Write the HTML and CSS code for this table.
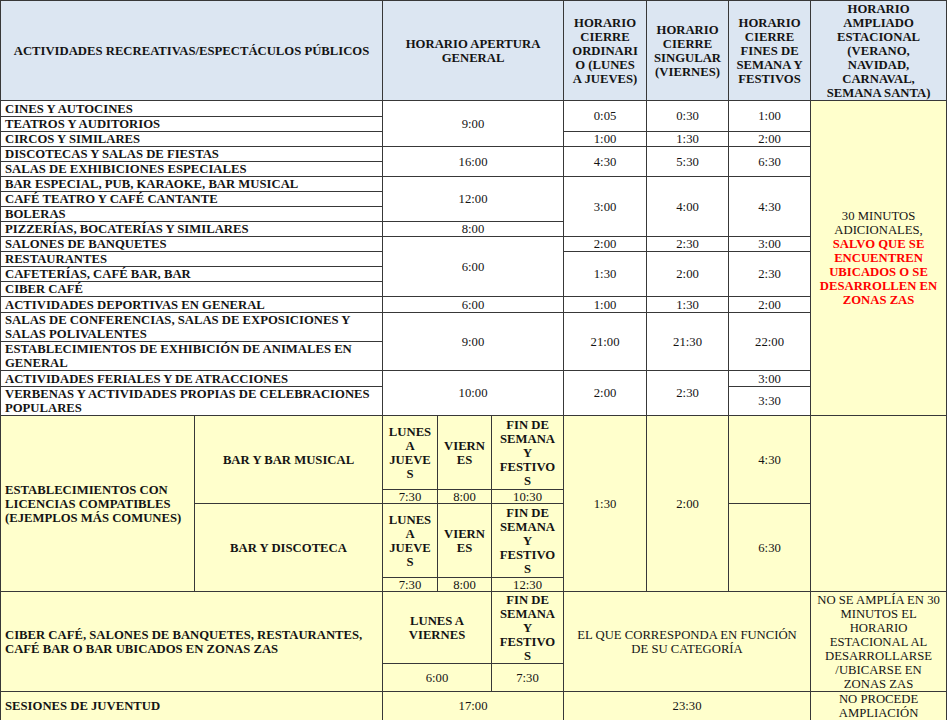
FILE: index.html
```html
<!DOCTYPE html>
<html lang="es">
<head>
<meta charset="utf-8">
<title>Horarios</title>
<link rel="stylesheet" href="styles.css">
</head>
<body>
<table class="grid">
  <colgroup>
    <col class="w194"><col class="w188"><col class="w55"><col class="w54"><col class="w72"><col class="w83"><col class="w82"><col class="w82"><col class="w136">
  </colgroup>
  <tr class="h100 hd">
    <td colspan="2">ACTIVIDADES RECREATIVAS/ESPECTÁCULOS PÚBLICOS</td>
    <td colspan="3">HORARIO APERTURA<br>GENERAL</td>
    <td>HORARIO<br>CIERRE<br>ORDINARI<br>O (LUNES<br>A JUEVES)</td>
    <td>HORARIO<br>CIERRE<br>SINGULAR<br>(VIERNES)</td>
    <td>HORARIO<br>CIERRE<br>FINES DE<br>SEMANA Y<br>FESTIVOS</td>
    <td class="top7">HORARIO<br>AMPLIADO<br>ESTACIONAL<br>(VERANO,<br>NAVIDAD,<br>CARNAVAL,<br>SEMANA SANTA)</td>
  </tr>
  <tr class="h16">
    <td colspan="2" class="lab">CINES Y AUTOCINES</td>
    <td colspan="3" rowspan="3">9:00</td>
    <td rowspan="2">0:05</td><td rowspan="2">0:30</td><td rowspan="2">1:00</td>
    <td rowspan="18" class="y">30 MINUTOS<br>ADICIONALES,<br><span class="red">SALVO QUE SE<br>ENCUENTREN<br>UBICADOS O SE<br>DESARROLLEN EN<br>ZONAS ZAS</span></td>
  </tr>
  <tr class="h15"><td colspan="2" class="lab">TEATROS Y AUDITORIOS</td></tr>
  <tr class="h15"><td colspan="2" class="lab">CIRCOS Y SIMILARES</td><td>1:00</td><td>1:30</td><td>2:00</td></tr>
  <tr class="h15">
    <td colspan="2" class="lab">DISCOTECAS Y SALAS DE FIESTAS</td>
    <td colspan="3" rowspan="2">16:00</td>
    <td rowspan="2">4:30</td><td rowspan="2">5:30</td><td rowspan="2">6:30</td>
  </tr>
  <tr class="h15"><td colspan="2" class="lab">SALAS DE EXHIBICIONES ESPECIALES</td></tr>
  <tr class="h15">
    <td colspan="2" class="lab">BAR ESPECIAL, PUB, KARAOKE, BAR MUSICAL</td>
    <td colspan="3" rowspan="3">12:00</td>
    <td rowspan="4">3:00</td><td rowspan="4">4:00</td><td rowspan="4">4:30</td>
  </tr>
  <tr class="h15"><td colspan="2" class="lab">CAFÉ TEATRO Y CAFÉ CANTANTE</td></tr>
  <tr class="h15"><td colspan="2" class="lab">BOLERAS</td></tr>
  <tr class="h15"><td colspan="2" class="lab">PIZZERÍAS, BOCATERÍAS Y SIMILARES</td><td colspan="3">8:00</td></tr>
  <tr class="h15">
    <td colspan="2" class="lab">SALONES DE BANQUETES</td>
    <td colspan="3" rowspan="4">6:00</td>
    <td>2:00</td><td>2:30</td><td>3:00</td>
  </tr>
  <tr class="h15">
    <td colspan="2" class="lab">RESTAURANTES</td>
    <td rowspan="3">1:30</td><td rowspan="3">2:00</td><td rowspan="3">2:30</td>
  </tr>
  <tr class="h15"><td colspan="2" class="lab">CAFETERÍAS, CAFÉ BAR, BAR</td></tr>
  <tr class="h15"><td colspan="2" class="lab">CIBER CAFÉ</td></tr>
  <tr class="h16">
    <td colspan="2" class="lab">ACTIVIDADES DEPORTIVAS EN GENERAL</td>
    <td colspan="3">6:00</td><td>1:00</td><td>1:30</td><td>2:00</td>
  </tr>
  <tr class="h29">
    <td colspan="2" class="lab">SALAS DE CONFERENCIAS, SALAS DE EXPOSICIONES Y<br>SALAS POLIVALENTES</td>
    <td colspan="3" rowspan="2">9:00</td>
    <td rowspan="2">21:00</td><td rowspan="2">21:30</td><td rowspan="2">22:00</td>
  </tr>
  <tr class="h29"><td colspan="2" class="lab">ESTABLECIMIENTOS DE EXHIBICIÓN DE ANIMALES EN<br>GENERAL</td></tr>
  <tr class="h16">
    <td colspan="2" class="lab">ACTIVIDADES FERIALES Y DE ATRACCIONES</td>
    <td colspan="3" rowspan="2">10:00</td>
    <td rowspan="2">2:00</td><td rowspan="2">2:30</td><td>3:00</td>
  </tr>
  <tr class="h28"><td colspan="2" class="lab">VERBENAS Y ACTIVIDADES PROPIAS DE CELEBRACIONES<br>POPULARES</td><td>3:30</td></tr>

  <tr class="h74 y">
    <td rowspan="4" class="lab">ESTABLECIMIENTOS CON<br>LICENCIAS COMPATIBLES<br>(EJEMPLOS MÁS COMUNES)</td>
    <td rowspan="2" class="b">BAR Y BAR MUSICAL</td>
    <td class="b">LUNES<br>A<br>JUEVE<br>S</td>
    <td class="b">VIERN<br>ES</td>
    <td class="b">FIN DE<br>SEMANA<br>Y<br>FESTIVO<br>S</td>
    <td rowspan="4">1:30</td>
    <td rowspan="4">2:00</td>
    <td rowspan="2">4:30</td>
    <td rowspan="4"></td>
  </tr>
  <tr class="h14 y val"><td>7:30</td><td>8:00</td><td>10:30</td></tr>
  <tr class="h74 y">
    <td rowspan="2" class="b">BAR Y DISCOTECA</td>
    <td class="b">LUNES<br>A<br>JUEVE<br>S</td>
    <td class="b">VIERN<br>ES</td>
    <td class="b">FIN DE<br>SEMANA<br>Y<br>FESTIVO<br>S</td>
    <td rowspan="2">6:30</td>
  </tr>
  <tr class="h14 y val"><td>7:30</td><td>8:00</td><td>12:30</td></tr>
  <tr class="h72 y">
    <td colspan="2" rowspan="2" class="lab">CIBER CAFÉ, SALONES DE BANQUETES, RESTAURANTES,<br>CAFÉ BAR O BAR UBICADOS EN ZONAS ZAS</td>
    <td colspan="2" class="b">LUNES A<br>VIERNES</td>
    <td class="b">FIN DE<br>SEMANA<br>Y<br>FESTIVO<br>S</td>
    <td colspan="3" rowspan="2" class="up">EL QUE CORRESPONDA EN FUNCIÓN<br>DE SU CATEGORÍA</td>
    <td rowspan="2">NO SE AMPLÍA EN 30<br>MINUTOS EL<br>HORARIO<br>ESTACIONAL AL<br>DESARROLLARSE<br>/UBICARSE EN<br>ZONAS ZAS</td>
  </tr>
  <tr class="h28 y"><td colspan="2">6:00</td><td>7:30</td></tr>
  <tr class="h28 y">
    <td colspan="2" class="lab">SESIONES DE JUVENTUD</td>
    <td colspan="3">17:00</td>
    <td colspan="3">23:30</td>
    <td>NO PROCEDE<br>AMPLIACIÓN</td>
  </tr>
</table>
</body>
</html>
```
FILE: styles.css
```css
html, body {
  margin: 0;
  padding: 0;
  background: #ffffff;
}

.grid {
  border-collapse: collapse;
  table-layout: fixed;
  width: 947px;
  font-family: "Liberation Serif", "Times New Roman", serif;
  font-size: 12.7px;
  line-height: 14px;
  color: #141414;
}

.w194 { width: 194px; }
.w188 { width: 188px; }
.w55 { width: 55px; }
.w54 { width: 54px; }
.w72 { width: 72px; }
.w83 { width: 83px; }
.w82 { width: 82px; }
.w136 { width: 136px; }

.grid td {
  border: 1px solid #383838;
  padding: 0 3px;
  vertical-align: middle;
  text-align: center;
  white-space: nowrap;
  overflow: hidden;
}

.grid td.lab {
  text-align: left;
  font-weight: bold;
  padding-left: 4px;
}

.hd td {
  background: #dce6f2;
  font-weight: bold;
}

.hd td.top7 {
  line-height: 14px;
  vertical-align: bottom;
}

.y, .y td, td.y {
  background: #ffffcc;
}

.b { font-weight: bold; }

.red {
  color: #ff0000;
  font-weight: bold;
}

.val td { line-height: 12px; }

.up { padding-bottom: 4px; }

.h100 { height: 100px; }
.h74 { height: 74px; }
.h72 { height: 72px; }
.h29 { height: 29px; }
.h28 { height: 28px; }
.h16 { height: 16px; }
.h15 { height: 15px; }
.h14 { height: 14px; }
```
